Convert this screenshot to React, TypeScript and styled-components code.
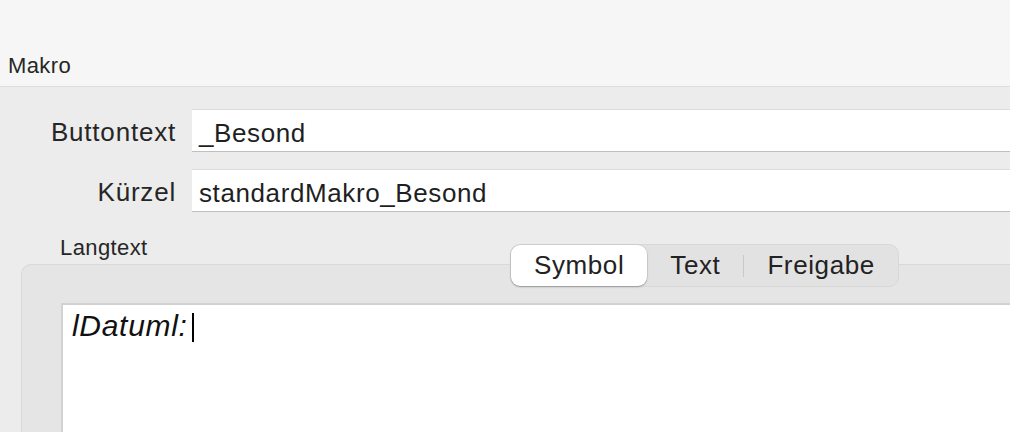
import styled, { createGlobalStyle } from "styled-components";

const GlobalStyle = createGlobalStyle`
	html, body {
		margin: 0;
		padding: 0;
		overflow: hidden;
		background: #ececec;
	}
	body {
		font-family: "Liberation Sans", Arial, sans-serif;
		color: #262626;
		width: 1010px;
		height: 432px;
	}
`;

const Header = styled.div`
	box-sizing: border-box;
	height: 87px;
	display: flex;
	align-items: flex-end;
	padding: 0 0 9px 8px;
	background: #f6f6f6;
	border-bottom: 1px solid #dedede;
	font-size: 22px;
	line-height: 22px;
	letter-spacing: 0.4px;
`;

const Form = styled.div`
	display: grid;
	grid-template-columns: 176px 1fr;
	column-gap: 16px;
	row-gap: 18px;
	padding-top: 22px;
`;

const Label = styled.label`
	box-sizing: border-box;
	height: 42px;
	padding-top: 4px;
	font-size: 26px;
	line-height: 38px;
	letter-spacing: 0.8px;
	text-align: right;
`;

const Field = styled.div`
	box-sizing: border-box;
	height: 42px;
	padding: 8px 0 0 7px;
	background: #fff;
	border-top: 1px solid #dcdcdc;
	box-shadow: 0 1px 0 #bfbfbf;
	font-size: 26px;
	line-height: 30px;
	letter-spacing: 0.6px;
	color: #1f1f1f;
`;

const SectionTitle = styled.div`
	margin: 26px 0 0 60px;
	font-size: 22px;
	line-height: 22px;
	letter-spacing: 0.4px;
`;

const TabView = styled.div`
	margin: -15px 0 0 21px;
`;

const SegmentBar = styled.div`
	position: relative;
	z-index: 1;
	display: flex;
	align-items: center;
	width: max-content;
	height: 43px;
	box-sizing: border-box;
	margin-left: 489px;
	background: #e2e2e2;
	border: 1px solid #d8d8d8;
	border-radius: 10px;
`;

const Segment = styled.div<{ $active?: boolean }>`
	height: 41px;
	padding: 0 23px;
	font-size: 26px;
	line-height: 41px;
	letter-spacing: 0.6px;
	border-radius: 9px;
	color: #222;
	background: ${(p) => (p.$active ? "#fff" : "transparent")};
	box-shadow: ${(p) =>
		p.$active ? "0 1px 2px rgba(0,0,0,0.28), 0 0 0 0.5px rgba(0,0,0,0.08)" : "none"};
`;

const Divider = styled.div`
	width: 1px;
	height: 22px;
	background: #c9c9c9;
`;

const Box = styled.div`
	margin-top: -23px;
	height: 168px;
	box-sizing: border-box;
	padding: 38px 0 0 39px;
	background: #e5e5e5;
	border: 1px solid #d9d9d9;
	border-right: none;
	border-bottom: none;
	border-radius: 10px 0 0 0;
`;

const TextArea = styled.div`
	height: 100%;
	box-sizing: border-box;
	padding: 3px 0 0 9px;
	background: #fff;
	border-top: 2px solid #d2d2d2;
	border-left: 2px solid #d2d2d2;
	font-size: 30px;
	line-height: 36px;
	letter-spacing: 0.7px;
	font-style: italic;
	color: #111;
`;

const Caret = styled.span`
	display: inline-block;
	width: 2px;
	height: 29px;
	margin-left: 4px;
	vertical-align: -6px;
	background: #000;
`;

export default function App() {
	return (
		<>
			<GlobalStyle />
			<Header>Makro</Header>
			<Form>
				<Label>Buttontext</Label>
				<Field>_Besond</Field>
				<Label>Kürzel</Label>
				<Field>standardMakro_Besond</Field>
			</Form>
			<SectionTitle>Langtext</SectionTitle>
			<TabView>
				<SegmentBar>
					<Segment $active>Symbol</Segment>
					<Segment>Text</Segment>
					<Divider />
					<Segment>Freigabe</Segment>
				</SegmentBar>
				<Box>
					<TextArea>
						lDatuml:
						<Caret />
					</TextArea>
				</Box>
			</TabView>
		</>
	);
}
